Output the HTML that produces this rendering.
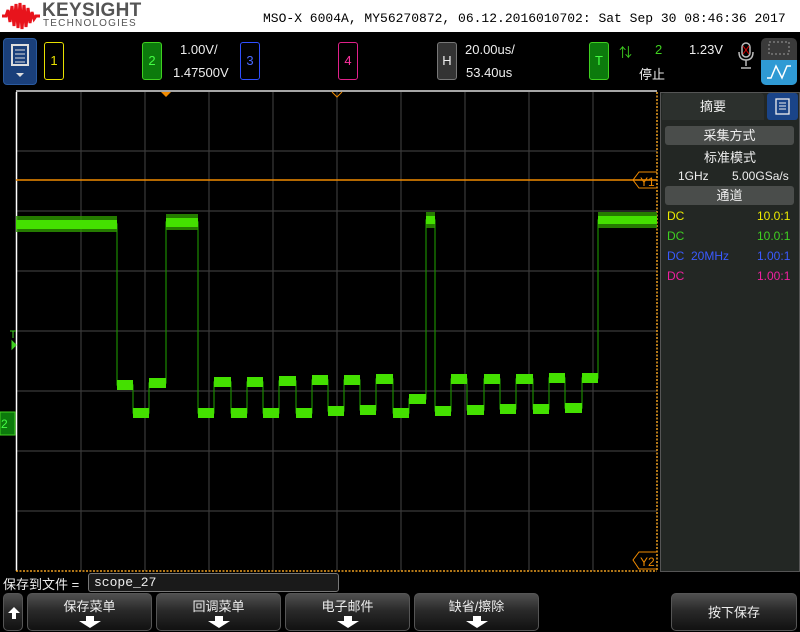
<!DOCTYPE html>
<html><head><meta charset="utf-8"><style>
*{margin:0;padding:0;box-sizing:border-box}
body{width:800px;height:632px;background:#000;position:relative;overflow:hidden;font-family:"Liberation Sans","Noto Sans CJK SC",sans-serif;color:#eee}
.a{position:absolute}
.hdr{left:0;top:0;width:800px;height:32px;background:#fff}
.box{position:absolute;border:1px solid;border-radius:3px;text-align:center;font-size:13px;line-height:36px}
.btn{position:absolute;top:593px;height:38px;border:1px solid #555;border-radius:5px;background:linear-gradient(#505050,#2a2a2a 45%,#111);text-align:center;font-size:13px;color:#eee;padding-top:2px}
.arr{position:absolute;left:50%;bottom:2px;margin-left:-11px;width:22px;height:12px}
.rp{font-size:12px;position:absolute}
</style></head><body>
<div class="a hdr"></div>
<svg class="a" style="left:2px;top:2px" width="38" height="28" viewBox="0 0 38 28"><path d="M0 14 L4 14 L6 8 L8 20 L10 4 L12 24 L14 2 L16 26 L18 1 L20 27 L22 3 L24 25 L26 6 L28 21 L30 10 L32 17 L34 14 L38 14" stroke="#e8141c" stroke-width="3" fill="none"/></svg>
<div class="a" style="left:42px;top:0px;font-size:19px;font-weight:bold;color:#555;letter-spacing:0.3px">KEYSIGHT</div>
<div class="a" style="left:43px;top:18px;font-size:10px;color:#555;letter-spacing:1.2px">TECHNOLOGIES</div>
<div class="a" style="left:263px;top:11px;font-family:'Liberation Mono',monospace;font-size:13px;color:#000;white-space:nowrap">MSO-X 6004A, MY56270872, 06.12.2016010702: Sat Sep 30 08:46:36 2017</div>

<div class="a" style="left:3px;top:38px;width:34px;height:47px;background:#1a3f7a;border-radius:4px;border:1px solid #2a5aa0"></div>
<svg class="a" style="left:10px;top:44px" width="20" height="36"><rect x="2" y="1" width="16" height="20" fill="none" stroke="#ddd" stroke-width="2"/><path d="M5 6h10M5 10h10M5 14h10M5 18h10" stroke="#ddd"/><path d="M6 29h8l-4 4z" fill="#ddd"/></svg>
<div class="box" style="left:44px;top:42px;width:20px;height:38px;border-color:#e8e000;color:#e8e000">1</div>
<div class="box" style="left:142px;top:42px;width:20px;height:38px;border-color:#3fd020;background:#0c7a0c;color:#4f4">2</div>
<div class="a" style="left:180px;top:42px;font-size:13px">1.00V/</div>
<div class="a" style="left:173px;top:65px;font-size:13px">1.47500V</div>
<div class="box" style="left:240px;top:42px;width:20px;height:38px;border-color:#3050ff;color:#4a6aff">3</div>
<div class="box" style="left:338px;top:42px;width:20px;height:38px;border-color:#e0208a;color:#ff30a0">4</div>
<div class="box" style="left:437px;top:42px;width:20px;height:38px;border-color:#777;background:#333;color:#eee">H</div>
<div class="a" style="left:465px;top:42px;font-size:13px">20.00us/</div>
<div class="a" style="left:466px;top:65px;font-size:13px">53.40us</div>
<div class="box" style="left:589px;top:42px;width:20px;height:38px;border-color:#3fd020;background:#0c7a0c;color:#4f4">T</div>
<div class="a" style="left:619px;top:42px;font-size:13px;color:#3fd020">⇅</div>
<div class="a" style="left:655px;top:42px;font-size:13px;color:#3fd020">2</div>
<div class="a" style="left:689px;top:42px;font-size:13px">1.23V</div>
<div class="a" style="left:639px;top:64px;font-size:13px">停止</div>
<svg class="a" style="left:738px;top:42px" width="16" height="30"><rect x="4" y="1" width="8" height="14" rx="4" fill="none" stroke="#bbb" stroke-width="1.5"/><path d="M5 4l6 8M11 4l-6 8" stroke="#d00"/><path d="M1 10q0 8 7 8q7 0 7-8M8 18v6M3 26h10" stroke="#bbb" stroke-width="1.5" fill="none"/></svg>
<div class="a" style="left:761px;top:38px;width:36px;height:47px;border-radius:5px;background:#3a3a3a;overflow:hidden"><div style="position:absolute;left:0;top:22px;width:36px;height:25px;background:#2f9ad4"></div>
<svg style="position:absolute;left:0;top:0" width="36" height="47"><rect x="8" y="4" width="20" height="12" fill="none" stroke="#999" stroke-dasharray="2 2"/><path d="M6 40h4l5-12 6 12 5-12h4" stroke="#fff" fill="none" stroke-width="1.5"/></svg></div>

<svg class="a" style="left:0;top:88px" width="660" height="490">
<g transform="translate(0,-88)">
<g stroke="#3a3a3a" stroke-width="1.2">
<path d="M81 92V571M145 92V571M209 92V571M273 92V571M337 92V571M401 92V571M465 92V571M529 92V571M593 92V571"/>
<path d="M16 151H657M16 211H657M16 271H657M16 331H657M16 391H657M16 451H657M16 511H657"/>
</g>
<path d="M16 91H657" stroke="#ddd" stroke-width="1.5"/>
<path d="M16.5 92V571" stroke="#fff" stroke-width="1.5"/>
<path d="M16 571H657M657 92V571" stroke="#f0a020" stroke-width="1.5" stroke-dasharray="2 1.5"/>
<path d="M16 180H657" stroke="#f08a00" stroke-width="1.5"/>
<path d="M161 92l5 5 5-5z" fill="#f08a00"/><path d="M332 92l5 5 5-5" stroke="#f08a00" fill="none"/>
<path d="M657 172h-18l-6 8 6 8h18" stroke="#f08a00" fill="none"/><text x="640" y="186" font-size="12" fill="#f08a00" font-family="Liberation Sans">Y1</text>
<path d="M657 552h-18l-6 8 6 9h18" stroke="#f08a00" fill="none"/><text x="640" y="566" font-size="12" fill="#f08a00" font-family="Liberation Sans">Y2</text>
<path d="M10 331h6M13 331v7M12 341l4 4-4 4z" stroke="#3fd020" fill="#3fd020"/>
<rect x="0" y="412" width="15" height="23" fill="#0c7a0c" stroke="#3fd020"/><text x="1" y="428" font-size="12" fill="#4f4" font-family="Liberation Sans">2</text>
<path d="M16 224H117V385H133V413H149V383H166V222H198V413H214V382H231V413H247V382H263V413H279V381H296V413H312V380H328V411H344V380H360V410H376V379H393V413H409V399H426V220H435V411H451V379H467V410H484V379H500V409H516V379H533V409H549V378H565V408H582V378H598V220H657" stroke="#1a8a00" stroke-width="1.2" fill="none"/>
<g fill="#2e9a00" opacity="0.8">
<rect x="16" y="216" width="101" height="16"/><rect x="166" y="214" width="32" height="16"/><rect x="598" y="212" width="59" height="16"/><rect x="426" y="212" width="9" height="16"/>
</g>
<g fill="#44e000">
<rect x="16" y="220" width="101" height="9"/><rect x="166" y="218" width="32" height="9"/><rect x="598" y="216" width="59" height="8"/><rect x="426" y="216" width="9" height="8"/>
<rect x="117" y="380" width="16" height="10"/><rect x="133" y="408" width="16" height="10"/><rect x="149" y="378" width="17" height="10"/><rect x="198" y="408" width="16" height="10"/><rect x="214" y="377" width="17" height="10"/><rect x="231" y="408" width="16" height="10"/><rect x="247" y="377" width="16" height="10"/><rect x="263" y="408" width="16" height="10"/><rect x="279" y="376" width="17" height="10"/><rect x="296" y="408" width="16" height="10"/><rect x="312" y="375" width="16" height="10"/><rect x="328" y="406" width="16" height="10"/><rect x="344" y="375" width="16" height="10"/><rect x="360" y="405" width="16" height="10"/><rect x="376" y="374" width="17" height="10"/><rect x="393" y="408" width="16" height="10"/><rect x="409" y="394" width="17" height="10"/><rect x="435" y="406" width="16" height="10"/><rect x="451" y="374" width="16" height="10"/><rect x="467" y="405" width="17" height="10"/><rect x="484" y="374" width="16" height="10"/><rect x="500" y="404" width="16" height="10"/><rect x="516" y="374" width="17" height="10"/><rect x="533" y="404" width="16" height="10"/><rect x="549" y="373" width="16" height="10"/><rect x="565" y="403" width="17" height="10"/><rect x="582" y="373" width="16" height="10"/>
</g>
</g></svg>

<div class="a" style="left:660px;top:92px;width:140px;height:480px;background:#232724;border:1px solid #555"></div>
<div class="a" style="left:662px;top:93px;width:102px;height:27px;background:#2c302d;border-radius:4px 4px 0 0;text-align:center;font-size:13px;line-height:27px">摘要</div>
<div class="a" style="left:767px;top:93px;width:31px;height:27px;background:#1a4488;border-radius:3px"><svg width="31" height="27"><rect x="9" y="6" width="13" height="15" fill="none" stroke="#eee" stroke-width="1.3"/><path d="M12 10h7M12 13h7M12 16h7" stroke="#eee"/></svg></div>
<div class="a" style="left:665px;top:126px;width:129px;height:19px;background:#4a4d4b;border-radius:3px;text-align:center;font-size:13px;line-height:19px">采集方式</div>
<div class="rp" style="left:660px;top:147px;width:140px;text-align:center;font-size:13px">标准模式</div>
<div class="rp" style="left:678px;top:169px;font-size:12px">1GHz</div>
<div class="rp" style="left:732px;top:169px;font-size:12px">5.00GSa/s</div>
<div class="a" style="left:665px;top:186px;width:129px;height:19px;background:#4a4d4b;border-radius:3px;text-align:center;font-size:13px;line-height:19px">通道</div>
<div class="rp" style="left:667px;top:209px;color:#ecec00">DC</div><div class="rp" style="left:757px;top:209px;color:#ecec00">10.0:1</div>
<div class="rp" style="left:667px;top:229px;color:#3fd020">DC</div><div class="rp" style="left:757px;top:229px;color:#3fd020">10.0:1</div>
<div class="rp" style="left:667px;top:249px;color:#3a5aff">DC&nbsp;&nbsp;20MHz</div><div class="rp" style="left:757px;top:249px;color:#3a5aff">1.00:1</div>
<div class="rp" style="left:667px;top:269px;color:#f020a0">DC</div><div class="rp" style="left:757px;top:269px;color:#f020a0">1.00:1</div>

<div class="a" style="left:3px;top:574px;font-size:13px">保存到文件 =</div>
<div class="a" style="left:88px;top:573px;width:251px;height:19px;border:1px solid #777;border-radius:3px;background:#1a1a1a;font-family:'Liberation Mono',monospace;font-size:13px;padding-left:5px;line-height:17px">scope_27</div>
<div class="btn" style="left:3px;width:20px"><svg style="position:absolute;left:3px;top:12px" width="14" height="14"><path d="M7 1l6 6H9v6H5V7H1z" fill="#fff"/></svg></div>
<div class="btn" style="left:27px;width:125px">保存菜单<svg class="arr"><path d="M7 0h8v5h7l-11 7L0 5h7z" fill="#fff"/></svg></div>
<div class="btn" style="left:156px;width:125px">回调菜单<svg class="arr"><path d="M7 0h8v5h7l-11 7L0 5h7z" fill="#fff"/></svg></div>
<div class="btn" style="left:285px;width:125px">电子邮件<svg class="arr"><path d="M7 0h8v5h7l-11 7L0 5h7z" fill="#fff"/></svg></div>
<div class="btn" style="left:414px;width:125px">缺省/擦除<svg class="arr"><path d="M7 0h8v5h7l-11 7L0 5h7z" fill="#fff"/></svg></div>
<div class="btn" style="left:671px;width:126px;line-height:34px;font-size:13px">按下保存</div>
</body></html>
